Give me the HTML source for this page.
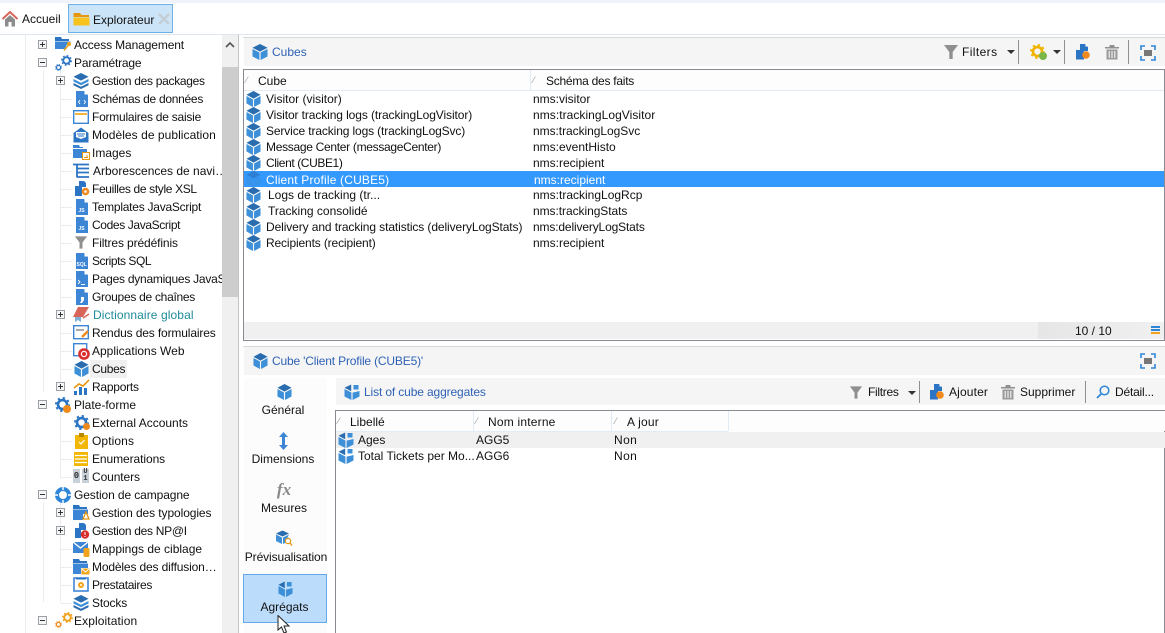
<!DOCTYPE html>
<html><head><meta charset="utf-8">
<style>
html,body{margin:0;padding:0;background:#fff;}
#p{position:relative;width:1165px;height:633px;overflow:hidden;background:#fff;font-family:"Liberation Sans",sans-serif;font-size:12px;color:#111;}
.a,.t,svg.i{position:absolute;}
.t{white-space:nowrap;line-height:16px;height:16px;}
.b{color:#2f62b5;}
.box{position:absolute;width:7px;height:7px;border:1px solid #9aa0a6;background:#f6f6f6;}
.box:before{content:"";position:absolute;left:1px;top:3px;width:5px;height:1px;background:#333;}
.box.p:after{content:"";position:absolute;left:3px;top:1px;width:1px;height:5px;background:#333;}
.hl{position:absolute;height:1px;background:#ececec;}
.vl{position:absolute;width:1px;background:#ececec;}
.sep{position:absolute;width:1px;background:#8f8f8f;}
.m{font:bold 5px "Liberation Sans",sans-serif;fill:#fff;}
</style></head><body>
<div id="p">
<svg width="0" height="0" style="position:absolute">
<defs>
<symbol id="cube" viewBox="0 0 16 16" preserveAspectRatio="none"><path d="M8 0L15.500 3.800L8 7.600L.5 3.800Z" fill="#2a6cb0"/><path d="M.5 5L7.400 8.500V16L.5 12.500Z" fill="#3d8fd8"/><path d="M15.500 5L8.600 8.500V16L15.500 12.500Z" fill="#3d8fd8"/></symbol>
<symbol id="stack" viewBox="0 0 16 16" preserveAspectRatio="none"><path d="M8 0L15.500 3.800L8 7.600L.5 3.800Z" fill="#2a6cb0"/><path d="M.5 6L8 9.800L15.500 6V8.500L8 12.300L.5 8.500Z" fill="#3d8fd8"/><path d="M.5 10L8 13.800L15.500 10V12.300L8 16L.5 12.300Z" fill="#2a6cb0"/></symbol>
<symbol id="agg" viewBox="0 0 16 16" preserveAspectRatio="none"><path d="M7.200 .5L.5 3.800L7.200 7.200Z" fill="#2a6cb0"/><path d="M9.500 1H14.500V5.500H9.500Z" fill="#3d8fd8"/><path d="M.5 5L7.400 8.500V16L.5 12.500Z" fill="#3d8fd8"/><path d="M15.500 7L8.600 8.600V16L15.500 12.500Z" fill="#3d8fd8"/></symbol>
<symbol id="doc" viewBox="0 0 14 16"><path d="M1 0H9L13 4V16H1Z" fill="#3d86d6"/><path d="M9.500 0L13 3.500H9.500Z" fill="#fff"/></symbol>
<symbol id="gear" viewBox="0 0 16 16"><circle cx="8" cy="8" r="4.800" fill="none" stroke="currentColor" stroke-width="2.800"/><circle cx="8" cy="8" r="7" fill="none" stroke="currentColor" stroke-width="2" stroke-dasharray="2.400 3.100"/></symbol>
<symbol id="funnel" viewBox="0 0 16 16"><path d="M1 1H15L9.700 8V15H6.300V8Z" fill="#8f8f8f"/></symbol>
<symbol id="trash" viewBox="0 0 16 16"><path d="M1 3H15V4.500H1ZM5.500 1H10.500V3H5.500Z" fill="#8f8f8f"/><path d="M2.500 5.500H13.500V15.500H2.500Z" fill="#9a9a9a"/><path d="M5.200 7V14M8 7V14M10.800 7V14" stroke="#fff" stroke-width="1"/></symbol>
<symbol id="full" viewBox="0 0 16 16"><path d="M1 5V1H5M11 1H15V5M15 11V15H11M5 15H1V11" fill="none" stroke="#2e86d8" stroke-width="1.600"/><rect x="4" y="5" width="8" height="6" fill="#777"/></symbol>
<symbol id="add" viewBox="0 0 16 16"><path d="M1 6H5V0H10L13 3V7H9V15.500H1Z" fill="#2c74c4"/><path d="M10.500 0L13 2.500H10.500Z" fill="#fff"/><circle cx="11" cy="11" r="3.800" fill="#f08a1d"/></symbol>
</defs>
</svg>

<!-- top bar -->
<div class="a" style="left:0;top:0;width:1165px;height:3px;background:#f0f4fa"></div>
<div class="a" style="left:0;top:34px;width:1165px;height:1px;background:#dfe5ee"></div>
<svg class="i" style="left:2px;top:11px" width="16" height="16" viewBox="0 0 16 16"><path d="M0.500 8L8 1L15.500 8" fill="none" stroke="#d9655a" stroke-width="2"/><path d="M3 8.500L8 4L13 8.500V15.500H9.500V11H6.500V15.500H3Z" fill="#8c8c8c"/></svg>
<div class="t" style="left:22px;top:11px">Accueil</div>
<div class="a" style="left:68px;top:4px;width:103px;height:27px;background:#cce4f7;border:1px solid #6fb0e8"></div>
<svg class="i" style="left:73px;top:12px" width="17" height="14" viewBox="0 0 17 14"><path d="M0.500 1H7L8.500 3H16V5H0.500Z" fill="#e8960f"/><path d="M0.500 5.500H16.500V13.500H0.500Z" fill="#f8c21c"/></svg>
<div class="t" style="left:93px;top:12px">Explorateur</div>
<svg class="i" style="left:158px;top:13px" width="12" height="12" viewBox="0 0 12 12"><path d="M1 1L11 11M11 1L1 11" stroke="#c3cdd6" stroke-width="2.400"/></svg>

<!-- tree -->
<div class="vl" style="left:25px;top:35px;height:598px"></div>
<div class="vl" style="left:43px;top:70px;height:322px"></div>
<div class="vl" style="left:60px;top:70px;height:318px"></div>
<div class="vl" style="left:60px;top:412px;height:66px"></div>
<div class="vl" style="left:60px;top:502px;height:100px"></div>
<div class="vl" style="left:43px;top:502px;height:100px"></div>
<div class="hl" style="left:60px;top:99px;width:12px"></div>
<div class="hl" style="left:60px;top:117px;width:12px"></div>
<div class="hl" style="left:60px;top:135px;width:12px"></div>
<div class="hl" style="left:60px;top:153px;width:12px"></div>
<div class="hl" style="left:60px;top:171px;width:12px"></div>
<div class="hl" style="left:60px;top:189px;width:12px"></div>
<div class="hl" style="left:60px;top:207px;width:12px"></div>
<div class="hl" style="left:60px;top:225px;width:12px"></div>
<div class="hl" style="left:60px;top:243px;width:12px"></div>
<div class="hl" style="left:60px;top:261px;width:12px"></div>
<div class="hl" style="left:60px;top:279px;width:12px"></div>
<div class="hl" style="left:60px;top:297px;width:12px"></div>
<div class="hl" style="left:60px;top:333px;width:12px"></div>
<div class="hl" style="left:60px;top:351px;width:12px"></div>
<div class="hl" style="left:60px;top:369px;width:12px"></div>
<div class="hl" style="left:60px;top:441px;width:12px"></div>
<div class="hl" style="left:60px;top:459px;width:12px"></div>
<div class="hl" style="left:60px;top:477px;width:12px"></div>
<div class="hl" style="left:60px;top:549px;width:12px"></div>
<div class="hl" style="left:60px;top:567px;width:12px"></div>
<div class="hl" style="left:60px;top:585px;width:12px"></div>
<div class="hl" style="left:60px;top:603px;width:12px"></div>

<div class="box p" style="left:38px;top:40px"></div>
<div class="box" style="left:38px;top:58px"></div>
<div class="box p" style="left:56px;top:76px"></div>
<div class="box p" style="left:56px;top:310px"></div>
<div class="box p" style="left:56px;top:382px"></div>
<div class="box" style="left:38px;top:400px"></div>
<div class="box" style="left:38px;top:490px"></div>
<div class="box p" style="left:56px;top:508px"></div>
<div class="box p" style="left:56px;top:526px"></div>
<div class="box" style="left:38px;top:616px"></div>

<!-- tree icons -->
<svg class="i" style="left:55px;top:36px" width="17" height="17" viewBox="0 0 17 17"><path d="M0 1H6L7 3H14V5H0Z" fill="#2c74c4"/><path d="M0 5.500H16L12 8L10 13H0Z" fill="#3d86d6"/><circle cx="14" cy="8" r="2" fill="#e8a21c"/><path d="M13 9.500L9 14.500" stroke="#e8a21c" stroke-width="1.600"/></svg>
<svg class="i" style="left:61px;top:55px;color:#2c74c4" width="11" height="11"><use href="#gear"/></svg>
<svg class="i" style="left:55px;top:64px;color:#2c74c4" width="7" height="7"><use href="#gear"/></svg>
<svg class="i" style="left:73px;top:73px" width="16" height="16"><use href="#stack"/></svg>
<svg class="i" style="left:75px;top:91px" width="14" height="16" viewBox="0 0 14 16"><use href="#doc" width="14" height="16"/><path d="M5 9L3.500 11L5 13M9 9L10.500 11L9 13" fill="none" stroke="#fff" stroke-width=".9"/></svg>
<svg class="i" style="left:73px;top:110px" width="16" height="14" viewBox="0 0 16 14"><rect x=".7" y=".7" width="14.600" height="12.600" fill="#fff" stroke="#3d86d6" stroke-width="1.400"/><rect x="2" y="3" width="12" height="2" fill="#f2b43c"/></svg>
<svg class="i" style="left:73px;top:127px" width="16" height="16" viewBox="0 0 16 16"><path d="M8 .5L15.500 6V15.500H.5V6Z" fill="#2c74c4"/><path d="M3 5H13V10L8 12L3 10Z" fill="#fff"/><path d="M4 7H12M5 9H11" stroke="#2c74c4"/></svg>
<svg class="i" style="left:73px;top:145px" width="17" height="15" viewBox="0 0 17 15"><path d="M0 0H6L7 2H10V3H0Z" fill="#3d86d6"/><path d="M0 4H14V7H9V13H0Z" fill="#3d86d6"/><rect x="9.500" y="7.500" width="7" height="7" fill="#fff" stroke="#e8960f"/><path d="M11 12.500H15M14 10V12" stroke="#e8960f"/></svg>
<svg class="i" style="left:73px;top:163px" width="16" height="16" viewBox="0 0 16 16"><path d="M0 1.500H16M4 1.500V14.500M4 5.500H16M4 9.500H16M4 14H16" stroke="#2c74c4" stroke-width="1.800" fill="none"/></svg>
<svg class="i" style="left:74px;top:181px" width="16" height="15" viewBox="0 0 16 15"><path d="M1 5H5V0H10L12 2V6H8V15H1Z" fill="#2c74c4"/><circle cx="11.500" cy="10.500" r="3.800" fill="#f08a1d"/><circle cx="11.500" cy="10.500" r="1.300" fill="#fff"/></svg>
<svg class="i" style="left:75px;top:199px" width="14" height="16" viewBox="0 0 14 16"><use href="#doc" width="14" height="16"/><text class="m" x="3.500" y="13">JS</text></svg>
<svg class="i" style="left:75px;top:217px" width="14" height="16" viewBox="0 0 14 16"><use href="#doc" width="14" height="16"/><text class="m" x="3.500" y="13">JS</text></svg>
<svg class="i" style="left:74px;top:235px" width="14" height="15"><use href="#funnel"/></svg>
<svg class="i" style="left:75px;top:253px" width="14" height="16" viewBox="0 0 14 16"><use href="#doc" width="14" height="16"/><text class="m" x="1.500" y="13">SQL</text></svg>
<svg class="i" style="left:75px;top:271px" width="14" height="16" viewBox="0 0 14 16"><use href="#doc" width="14" height="16"/><path d="M3 9L5 11L3 13M6 13.500H10" fill="none" stroke="#fff" stroke-width=".9"/></svg>
<svg class="i" style="left:75px;top:289px" width="14" height="16" viewBox="0 0 14 16"><use href="#doc" width="14" height="16"/><path d="M6 8H9V11L7 14H5L6.500 11H6Z" fill="#fff"/></svg>
<svg class="i" style="left:73px;top:307px" width="17" height="15" viewBox="0 0 17 15"><path d="M5 0H16L10 10H0Z" fill="#d9655a"/><path d="M2 10H8V15L5 13L2 15Z" fill="#7fb0d8"/><path d="M10 11L16 7" stroke="#d9655a" stroke-width="1.500"/></svg>
<svg class="i" style="left:73px;top:325px" width="17" height="15" viewBox="0 0 17 15"><rect x=".7" y=".7" width="14.600" height="13" fill="#fff" stroke="#3d86d6" stroke-width="1.400"/><path d="M3 5H11" stroke="#555"/><path d="M9 12L15 6" stroke="#f08a1d" stroke-width="2.400"/></svg>
<svg class="i" style="left:73px;top:343px" width="17" height="17" viewBox="0 0 17 17"><rect x=".7" y=".7" width="13" height="12" fill="#fff" stroke="#3d86d6" stroke-width="1.400"/><circle cx="11" cy="11" r="5.800" fill="#d92c2c"/><circle cx="11" cy="11" r="2.600" fill="none" stroke="#fff" stroke-width="1.200"/></svg>
<div class="a" style="left:90px;top:360px;width:37px;height:18px;background:#f0f0f0"></div>
<svg class="i" style="left:74px;top:361px" width="15" height="16"><use href="#cube"/></svg>
<svg class="i" style="left:73px;top:378px" width="17" height="17" viewBox="0 0 17 17"><path d="M1 10L6 6L10 8L16 2" fill="none" stroke="#e8960f" stroke-width="1.600"/><path d="M1 13H4V17H1ZM6 9H9V17H6ZM11 10H14V17H11Z" fill="#2c74c4"/></svg>
<svg class="i" style="left:55px;top:397px;color:#2c74c4" width="15" height="15"><use href="#gear"/></svg>
<div class="a" style="left:63px;top:405px;width:8px;height:8px;border-radius:50%;background:#f08a1d"></div>
<svg class="i" style="left:74px;top:415px;color:#2c74c4" width="15" height="15"><use href="#gear"/></svg>
<div class="a" style="left:83px;top:423px;width:7px;height:7px;border-radius:50%;background:#f08a1d"></div>
<svg class="i" style="left:75px;top:433px" width="13" height="16" viewBox="0 0 13 16"><rect x="0" y="2" width="13" height="14" fill="#f2b705"/><rect x="4" y="0" width="5" height="4" fill="#b98a00"/><path d="M4 9L6 11L9.500 7" fill="none" stroke="#fff" stroke-width="1.200"/></svg>
<svg class="i" style="left:74px;top:452px" width="14" height="14" viewBox="0 0 14 14"><rect width="14" height="14" fill="#f2b705"/><path d="M1 3.500H13M1 7H13M1 10.500H13" stroke="#fff" stroke-width="1.300"/></svg>
<div class="a" style="left:73px;top:469px;width:7px;height:14px;background:#c8d0d8;font:bold 9px/14px 'Liberation Mono',monospace;color:#333;text-align:center">0</div>
<div class="a" style="left:82px;top:469px;width:7px;height:14px;background:#c8d0d8;font:bold 7px/7px 'Liberation Mono',monospace;color:#333;text-align:center">U<br>1</div>
<svg class="i" style="left:55px;top:487px" width="16" height="16" viewBox="0 0 16 16"><circle cx="8" cy="8" r="6" fill="none" stroke="#2e86d8" stroke-width="4"/><path d="M8 0V3M8 13V16M0 8H3M13 8H16" stroke="#fff" stroke-width="1.400"/></svg>
<svg class="i" style="left:73px;top:505px" width="17" height="16" viewBox="0 0 17 16"><path d="M0 0H6L7 2H14V4H0Z" fill="#2c74c4"/><path d="M0 4.500H15V9H10V15H0Z" fill="#3d86d6"/><path d="M13 7L16 14H10Z" fill="none" stroke="#e8960f" stroke-width="1.300"/></svg>
<svg class="i" style="left:74px;top:523px" width="16" height="16" viewBox="0 0 16 16"><path d="M1 5H5V0H10L12 2V7H7V15H1Z" fill="#2c74c4"/><circle cx="11" cy="11.500" r="4.200" fill="#d92c2c"/><path d="M11 9V12M11 13V14" stroke="#fff"/></svg>
<svg class="i" style="left:73px;top:541px" width="17" height="16" viewBox="0 0 17 16"><rect y="1" width="15" height="11" fill="#3d86d6"/><path d="M0 1L7.500 7L15 1" fill="none" stroke="#fff" stroke-width="1.300"/><rect x="10.500" y="7" width="6" height="9" rx="1.500" fill="#f2a51c"/></svg>
<svg class="i" style="left:73px;top:559px" width="17" height="16" viewBox="0 0 17 16"><path d="M0 0H6L7 2H14V4H0Z" fill="#2c74c4"/><path d="M0 4.500H15V9H8V15H0Z" fill="#3d86d6"/><rect x="8.500" y="9.500" width="8" height="6" fill="#f2a51c"/><path d="M9 10L12.500 13L16 10" fill="none" stroke="#fff"/></svg>
<svg class="i" style="left:73px;top:577px" width="16" height="15" viewBox="0 0 16 15"><rect x="1" y="1" width="14" height="13" fill="#fff" stroke="#3d86d6" stroke-width="1.600"/><rect x="3" y="1" width="10" height="1.500" fill="#2c74c4"/><circle cx="8" cy="8" r="3" fill="#f2a51c"/><circle cx="8" cy="8" r="1" fill="#fff"/></svg>
<svg class="i" style="left:73px;top:595px" width="16" height="16"><use href="#stack"/></svg>
<svg class="i" style="left:62px;top:612px;color:#f0a21c" width="11" height="11"><use href="#gear"/></svg>
<svg class="i" style="left:55px;top:621px;color:#f08a1d" width="7" height="7"><use href="#gear"/></svg>

<!-- tree labels -->
<div class="t" style="left:74px;top:37px;letter-spacing:-.12px">Access Management</div>
<div class="t" style="left:74px;top:55px;letter-spacing:-.18px">Paramétrage</div>
<div class="t" style="left:92px;top:73px;letter-spacing:-.3px">Gestion des packages</div>
<div class="t" style="left:92px;top:91px;letter-spacing:-.28px">Schémas de données</div>
<div class="t" style="left:92px;top:109px;letter-spacing:-.24px">Formulaires de saisie</div>
<div class="t" style="left:92px;top:127px;letter-spacing:.05px">Modèles de publication</div>
<div class="t" style="left:92px;top:145px">Images</div>
<div class="t" style="left:93px;top:163px">Arborescences de navi…</div>
<div class="t" style="left:92px;top:181px;letter-spacing:-.35px">Feuilles de style XSL</div>
<div class="t" style="left:92px;top:199px;letter-spacing:-.25px">Templates JavaScript</div>
<div class="t" style="left:92px;top:217px;letter-spacing:-.37px">Codes JavaScript</div>
<div class="t" style="left:92px;top:235px;letter-spacing:-.12px">Filtres prédéfinis</div>
<div class="t" style="left:92px;top:253px;letter-spacing:-.45px">Scripts SQL</div>
<div class="t" style="left:92px;top:271px;width:130px;overflow:hidden;letter-spacing:-.25px">Pages dynamiques JavaScript</div>
<div class="t" style="left:92px;top:289px;letter-spacing:-.28px">Groupes de chaînes</div>
<div class="t" style="left:93px;top:307px;color:#1f8a9a;letter-spacing:.1px">Dictionnaire global</div>
<div class="t" style="left:92px;top:325px;letter-spacing:-.14px">Rendus des formulaires</div>
<div class="t" style="left:92px;top:343px">Applications Web</div>
<div class="t" style="left:92px;top:361px;letter-spacing:-.3px">Cubes</div>
<div class="t" style="left:92px;top:379px;letter-spacing:-.25px">Rapports</div>
<div class="t" style="left:74px;top:397px">Plate-forme</div>
<div class="t" style="left:92px;top:415px">External Accounts</div>
<div class="t" style="left:92px;top:433px;letter-spacing:.1px">Options</div>
<div class="t" style="left:92px;top:451px;letter-spacing:-.08px">Enumerations</div>
<div class="t" style="left:92px;top:469px;letter-spacing:-.1px">Counters</div>
<div class="t" style="left:74px;top:487px;letter-spacing:-.1px">Gestion de campagne</div>
<div class="t" style="left:92px;top:505px;letter-spacing:-.09px">Gestion des typologies</div>
<div class="t" style="left:92px;top:523px;letter-spacing:-.3px">Gestion des NP@I</div>
<div class="t" style="left:92px;top:541px">Mappings de ciblage</div>
<div class="t" style="left:92px;top:559px;letter-spacing:-.15px">Modèles des diffusion…</div>
<div class="t" style="left:92px;top:577px;letter-spacing:-.33px">Prestataires</div>
<div class="t" style="left:92px;top:595px;letter-spacing:-.15px">Stocks</div>
<div class="t" style="left:74px;top:613px;letter-spacing:.1px">Exploitation</div>

<!-- scrollbar -->
<div class="a" style="left:222px;top:35px;width:16px;height:598px;background:#f0f0f0"></div>
<div class="a" style="left:222px;top:67px;width:16px;height:230px;background:#cdcdcd"></div>
<svg class="i" style="left:225px;top:41px" width="10" height="7" viewBox="0 0 10 7"><path d="M1 6L5 2L9 6" fill="none" stroke="#555" stroke-width="1.600"/></svg>
<div class="a" style="left:238px;top:35px;width:1px;height:598px;background:#c4c4c4"></div>

<!-- cubes panel -->
<div class="a" style="left:243px;top:37px;width:922px;height:1px;background:#d8d8d8"></div>
<div class="a" style="left:244px;top:38px;width:921px;height:28px;background:#f5f5f5"></div>
<svg class="i" style="left:252px;top:44px" width="16" height="16"><use href="#cube"/></svg>
<div class="t b" style="left:272px;top:44px">Cubes</div>
<svg class="i" style="left:943px;top:44px" width="16" height="16"><use href="#funnel"/></svg>
<div class="t" style="left:962px;top:44px;letter-spacing:.4px">Filters</div>
<div class="a" style="left:1007px;top:50px;border:4px solid transparent;border-top:4px solid #333;border-bottom:0"></div>
<div class="sep" style="left:1018px;top:40px;height:24px"></div>
<svg class="i" style="left:1030px;top:44px;color:#f0b400" width="15" height="15"><use href="#gear"/></svg>
<div class="a" style="left:1039px;top:52px;width:8px;height:8px;border-radius:50%;background:#7ab648"></div>
<div class="a" style="left:1053px;top:50px;border:4px solid transparent;border-top:4px solid #333;border-bottom:0"></div>
<div class="sep" style="left:1064px;top:40px;height:24px"></div>
<svg class="i" style="left:1075px;top:44px" width="16" height="16"><use href="#add"/></svg>
<svg class="i" style="left:1104px;top:44px" width="16" height="16"><use href="#trash"/></svg>
<div class="sep" style="left:1128px;top:40px;height:24px"></div>
<svg class="i" style="left:1140px;top:45px" width="16" height="16"><use href="#full"/></svg>

<div class="a" style="left:243px;top:69px;width:920px;height:270px;border:1px solid #8a8a92;background:#fff"></div>
<div class="a" style="left:244px;top:70px;width:920px;height:20px;background:#fdfdfd;border-bottom:1px solid #e3ecf6"></div>
<div class="a" style="left:530px;top:70px;width:1px;height:20px;background:#e3ecf6"></div>
<div class="t" style="left:246px;top:72px;color:#999;font-size:9px">⁄</div>
<div class="t" style="left:258px;top:73px">Cube</div>
<div class="t" style="left:533px;top:72px;color:#999;font-size:9px">⁄</div>
<div class="t" style="left:546px;top:73px;letter-spacing:-.25px">Schéma des faits</div>

<div class="a" style="left:244px;top:171px;width:920px;height:16px;background:#3399ff"></div>

<svg class="i" style="left:246px;top:91px" width="15" height="16"><use href="#cube"/></svg>
<svg class="i" style="left:246px;top:107px" width="15" height="16"><use href="#cube"/></svg>
<svg class="i" style="left:246px;top:123px" width="15" height="16"><use href="#cube"/></svg>
<svg class="i" style="left:246px;top:139px" width="15" height="16"><use href="#cube"/></svg>
<svg class="i" style="left:246px;top:155px" width="15" height="16"><use href="#cube"/></svg>
<svg class="i" style="left:246px;top:171px;opacity:.55" width="15" height="16"><use href="#cube"/></svg>
<svg class="i" style="left:246px;top:187px" width="15" height="16"><use href="#cube"/></svg>
<svg class="i" style="left:246px;top:203px" width="15" height="16"><use href="#cube"/></svg>
<svg class="i" style="left:246px;top:219px" width="15" height="16"><use href="#cube"/></svg>
<svg class="i" style="left:246px;top:235px" width="15" height="16"><use href="#cube"/></svg>

<div class="t" style="left:266px;top:91px">Visitor (visitor)</div><div class="t" style="left:533px;top:91px">nms:visitor</div>
<div class="t" style="left:266px;top:107px;letter-spacing:-.1px">Visitor tracking logs (trackingLogVisitor)</div><div class="t" style="left:533px;top:107px;letter-spacing:.05px">nms:trackingLogVisitor</div>
<div class="t" style="left:266px;top:123px;letter-spacing:-.13px">Service tracking logs (trackingLogSvc)</div><div class="t" style="left:533px;top:123px;letter-spacing:-.05px">nms:trackingLogSvc</div>
<div class="t" style="left:266px;top:139px;letter-spacing:-.3px">Message Center (messageCenter)</div><div class="t" style="left:533px;top:139px">nms:eventHisto</div>
<div class="t" style="left:266px;top:155px;letter-spacing:-.4px">Client (CUBE1)</div><div class="t" style="left:533px;top:155px">nms:recipient</div>
<div class="t" style="left:266px;top:172px;color:#fff;letter-spacing:.18px">Client Profile (CUBE5)</div><div class="t" style="left:534px;top:172px;color:#fff">nms:recipient</div>
<div class="t" style="left:268px;top:187px">Logs de tracking (tr...</div><div class="t" style="left:533px;top:187px">nms:trackingLogRcp</div>
<div class="t" style="left:268px;top:203px">Tracking consolidé</div><div class="t" style="left:533px;top:203px;letter-spacing:-.06px">nms:trackingStats</div>
<div class="t" style="left:266px;top:219px;letter-spacing:-.1px">Delivery and tracking statistics (deliveryLogStats)</div><div class="t" style="left:533px;top:219px;letter-spacing:-.15px">nms:deliveryLogStats</div>
<div class="t" style="left:266px;top:235px;letter-spacing:-.14px">Recipients (recipient)</div><div class="t" style="left:533px;top:235px">nms:recipient</div>

<div class="a" style="left:244px;top:322px;width:794px;height:17px;background:#f0f0f0"></div>
<div class="a" style="left:1038px;top:322px;width:126px;height:17px;background:linear-gradient(90deg,#e6e6e6,#f0f0f0)"></div>
<div class="t" style="left:1075px;top:323px">10 / 10</div>
<div class="a" style="left:1151px;top:326px;width:9px;height:2px;background:#2e86d8"></div>
<div class="a" style="left:1151px;top:329px;width:9px;height:2px;background:#2e86d8"></div>
<div class="a" style="left:1151px;top:332px;width:9px;height:2px;background:#f0a21c"></div>

<!-- detail panel -->
<div class="a" style="left:243px;top:346px;width:922px;height:1px;background:#d8d8d8"></div>
<div class="a" style="left:244px;top:347px;width:921px;height:28px;background:#f5f5f5"></div>
<svg class="i" style="left:253px;top:353px" width="15" height="16"><use href="#cube"/></svg>
<div class="t b" style="left:272px;top:353px;letter-spacing:-.17px">Cube 'Client Profile (CUBE5)'</div>
<svg class="i" style="left:1140px;top:353px" width="16" height="16"><use href="#full"/></svg>

<!-- sidebar -->
<div class="a" style="left:244px;top:378px;width:83px;height:255px;background:#fcfcfc"></div>
<svg class="i" style="left:277px;top:384px" width="15" height="16"><use href="#cube"/></svg>
<div class="t" style="left:243px;top:402px;width:80px;text-align:center">Général</div>
<svg class="i" style="left:276px;top:432px" width="15" height="18" viewBox="0 0 15 18"><path d="M7.500 0L12 5H9V13H12L7.500 18L3 13H6V5H3Z" fill="#3d86d6"/></svg>
<div class="t" style="left:243px;top:451px;width:80px;text-align:center">Dimensions</div>
<div class="t" style="left:243px;top:481px;width:82px;text-align:center;font:italic bold 17px/18px 'Liberation Serif',serif;color:#8a8a8a">fx</div>
<div class="t" style="left:244px;top:500px;width:80px;text-align:center">Mesures</div>
<svg class="i" style="left:276px;top:530px" width="17" height="17" viewBox="0 0 17 17"><path d="M6.500 0.500L13 3.500L6.500 6.500L0 3.500Z" fill="#2a6cb0"/><path d="M0 4.500L6 7.500V14L0 11ZM13 4.500L7 7.500V14L9 13Z" fill="#3d8fd8"/><circle cx="12" cy="11" r="2.600" fill="#fff" stroke="#e8960f" stroke-width="1.200"/><path d="M14 13L16 15.500" stroke="#e8960f" stroke-width="1.400"/></svg>
<div class="t" style="left:243px;top:549px;width:86px;text-align:center;letter-spacing:-.1px">Prévisualisation</div>
<div class="a" style="left:243px;top:574px;width:82px;height:47px;background:#bcdcfb;border:1px solid #66a8ec"></div>
<svg class="i" style="left:278px;top:581px" width="15" height="16"><use href="#agg"/></svg>
<div class="t" style="left:243px;top:599px;width:83px;text-align:center">Agrégats</div>
<svg class="i" style="left:277px;top:615px" width="13" height="19" viewBox="0 0 13 19"><path d="M1 0.500V15L4.500 12L7 18L9.500 17L7 11H12Z" fill="#fff" stroke="#222" stroke-width="1"/></svg>

<!-- aggregates toolbar -->
<div class="a" style="left:336px;top:378px;width:829px;height:27px;background:#f5f5f5"></div>
<svg class="i" style="left:344px;top:384px" width="16" height="16"><use href="#agg"/></svg>
<div class="t b" style="left:364px;top:384px;letter-spacing:-.13px">List of cube aggregates</div>
<svg class="i" style="left:849px;top:385px" width="14" height="15"><use href="#funnel"/></svg>
<div class="t" style="left:868px;top:384px;letter-spacing:-.3px">Filtres</div>
<div class="a" style="left:908px;top:391px;border:4px solid transparent;border-top:4px solid #333;border-bottom:0"></div>
<div class="sep" style="left:919px;top:381px;height:22px"></div>
<svg class="i" style="left:929px;top:384px" width="16" height="16"><use href="#add"/></svg>
<div class="t" style="left:949px;top:384px;letter-spacing:.15px">Ajouter</div>
<svg class="i" style="left:1000px;top:384px" width="16" height="16"><use href="#trash"/></svg>
<div class="t" style="left:1020px;top:384px">Supprimer</div>
<div class="sep" style="left:1085px;top:381px;height:22px"></div>
<svg class="i" style="left:1096px;top:385px" width="14" height="14" viewBox="0 0 14 14"><circle cx="8.500" cy="5.500" r="4.300" fill="none" stroke="#2e86d8" stroke-width="1.500"/><path d="M5.500 8.500L1 13" stroke="#2e86d8" stroke-width="1.800"/></svg>
<div class="t" style="left:1115px;top:384px;letter-spacing:-.2px">Détail...</div>

<!-- aggregates list -->
<div class="a" style="left:335px;top:410px;width:828px;height:224px;border:1px solid #8a8a92;background:#fff"></div>
<div class="a" style="left:336px;top:411px;width:829px;height:20px;background:#fdfdfd"></div>
<div class="a" style="left:336px;top:431px;width:392px;height:1px;background:#e3ecf6"></div>
<div class="a" style="left:473px;top:411px;width:1px;height:20px;background:#e3ecf6"></div>
<div class="a" style="left:611px;top:411px;width:1px;height:20px;background:#e3ecf6"></div>
<div class="a" style="left:728px;top:411px;width:1px;height:20px;background:#e3ecf6"></div>
<div class="t" style="left:338px;top:413px;color:#999;font-size:9px">⁄</div>
<div class="t" style="left:350px;top:414px">Libellé</div>
<div class="t" style="left:476px;top:413px;color:#999;font-size:9px">⁄</div>
<div class="t" style="left:488px;top:414px;letter-spacing:.2px">Nom interne</div>
<div class="t" style="left:615px;top:413px;color:#999;font-size:9px">⁄</div>
<div class="t" style="left:627px;top:414px;letter-spacing:.2px">A jour</div>
<div class="a" style="left:336px;top:432px;width:829px;height:16px;background:#f0f0f0"></div>
<svg class="i" style="left:338px;top:432px" width="16" height="16"><use href="#agg"/></svg>
<svg class="i" style="left:338px;top:448px" width="16" height="16"><use href="#agg"/></svg>
<div class="t" style="left:358px;top:432px">Ages</div><div class="t" style="left:476px;top:432px">AGG5</div><div class="t" style="left:614px;top:432px;letter-spacing:.4px">Non</div>
<div class="t" style="left:358px;top:448px">Total Tickets per Mo...</div><div class="t" style="left:476px;top:448px">AGG6</div><div class="t" style="left:614px;top:448px;letter-spacing:.4px">Non</div>
</div>
</body></html>
